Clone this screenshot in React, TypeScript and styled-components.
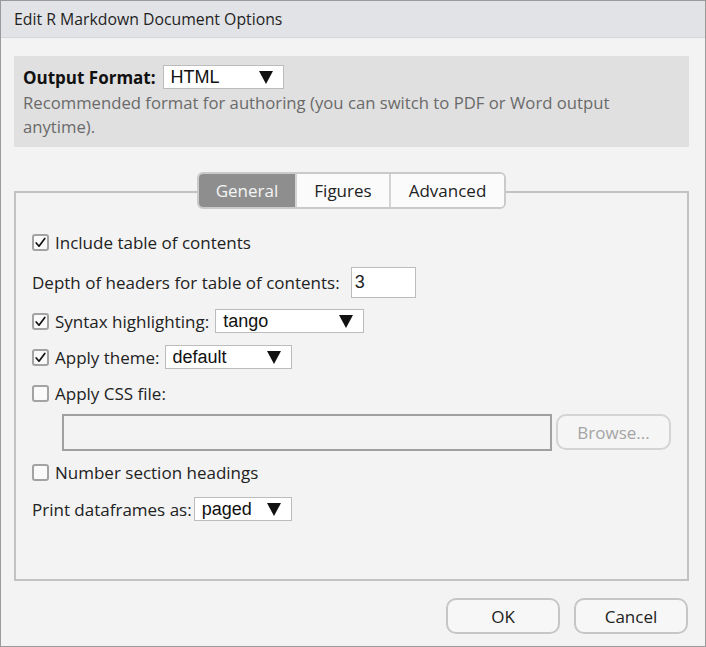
import React from "react";
import styled, { createGlobalStyle } from "styled-components";

const Global = createGlobalStyle`
  html, body { margin: 0; padding: 0; background: #f3f3f3; }
  * { box-sizing: border-box; }
`;

const UI = `"Open Sans", "Noto Sans", sans-serif`;
const SEL = `"Liberation Sans", Arial, sans-serif`;

const Dialog = styled.div`
  width: 706px;
  height: 647px;
  border: 1px solid #9a9a9a;
  background: #f3f3f3;
  display: flex;
  flex-direction: column;
  font-family: ${UI};
  color: #222;
`;

const TitleBar = styled.div`
  height: 37px;
  flex: none;
  background: #e2e3e7;
  border-bottom: 1px solid #d6d7db;
  padding-left: 13px;
  display: flex;
  align-items: center;
  font-size: 15.8px;
  color: #1f1f1f;
`;

const Body = styled.div`
  flex: 1;
  display: flex;
  flex-direction: column;
  padding: 18px 16px 12px 13px;
`;

const FormatPanel = styled.div`
  background: #e0e0e0;
  height: 91px;
  padding: 9px 9px 0 9px;
`;

const FormatLine = styled.div`
  display: flex;
  align-items: center;
  height: 24px;
  gap: 7px;
`;

const Bold = styled.span`
  font-weight: 700;
  font-size: 17px;
  color: #111;
`;

const Desc = styled.div`
  font-size: 16.7px;
  line-height: 24px;
  margin-top: 2px;
  color: #6a6a6a;
`;

const SelectBox = styled.div<{ $w: number }>`
  width: ${(p) => p.$w}px;
  height: 24px;
  background: #fff;
  border: 1px solid #bcbcbc;
  display: flex;
  align-items: center;
  justify-content: space-between;
  padding: 0 10px 0 7px;
  font-family: ${SEL};
  font-size: 18px;
  color: #111;
  flex: none;
`;

const TabSection = styled.div`
  flex: 1;
  display: flex;
  flex-direction: column;
  margin-top: 25px;
`;

const TabBar = styled.div`
  display: flex;
  justify-content: center;
  position: relative;
  z-index: 1;
  height: 37px;
`;

const TabGroup = styled.div`
  display: flex;
  border: 2px solid #cacaca;
  border-radius: 6px;
  overflow: hidden;
  background: #fbfbfb;
`;

const Tab = styled.div<{ $w: number; $active?: boolean }>`
  width: ${(p) => p.$w}px;
  display: flex;
  align-items: center;
  justify-content: center;
  font-size: 17px;
  background: ${(p) => (p.$active ? "#8e8e8e" : "#fbfbfb")};
  color: ${(p) => (p.$active ? "#f4f4f4" : "#222")};
  & + & {
    border-left: 2px solid #d4d4d4;
  }
`;

const Panel = styled.div`
  flex: 1;
  margin-top: -18px;
  border: 2px solid #c2c2c2;
  padding: 29px 16px 0 16px;
  display: flex;
  flex-direction: column;
`;

const Row = styled.div<{ $h: number; $gap?: number }>`
  height: ${(p) => p.$h}px;
  display: flex;
  align-items: center;
  font-size: 17px;
  gap: ${(p) => p.$gap ?? 5}px;
  flex: none;
`;

const CheckLabel = styled.label`
  display: flex;
  align-items: center;
  gap: 6px;
`;

const Box = styled.span`
  width: 17px;
  height: 17px;
  border: 2px solid #a3a3a3;
  border-radius: 3px;
  background: #fafafa;
  display: flex;
  align-items: center;
  justify-content: center;
  flex: none;
`;

const NumberInput = styled.div`
  width: 65px;
  height: 31px;
  background: #fff;
  border: 1px solid #bcbcbc;
  display: flex;
  align-items: center;
  padding-left: 3px;
  font-family: ${SEL};
  font-size: 18px;
  margin-left: 6px;
`;

const FileRow = styled.div`
  height: 40px;
  display: flex;
  align-items: center;
  gap: 4px;
  padding-left: 30px;
  flex: none;
`;

const FileInput = styled.div`
  width: 492px;
  height: 37px;
  border: 2px solid #a0a0a0;
  background: #f3f3f3;
`;

const RoundButton = styled.div<{ $w: number; $disabled?: boolean }>`
  width: ${(p) => p.$w}px;
  height: 36px;
  border: 2px solid ${(p) => (p.$disabled ? "#d4d4d4" : "#c6c6c6")};
  border-radius: 10px;
  background: ${(p) => (p.$disabled ? "#f5f5f5" : "#f7f7f7")};
  color: ${(p) => (p.$disabled ? "#a4a4a4" : "#222")};
  display: flex;
  align-items: center;
  justify-content: center;
  font-size: 17px;
  flex: none;
`;

const Footer = styled.div`
  display: flex;
  justify-content: flex-end;
  gap: 14px;
  margin-top: 17px;
  padding-right: 1px;
`;

const Arrow = () => (
  <svg width="14" height="13" viewBox="0 0 14 13">
    <polygon points="0,0 14,0 7,13" fill="#111" />
  </svg>
);

const Check = ({ on }: { on?: boolean }) => (
  <Box>
    {on && (
      <svg width="13" height="13" viewBox="0 0 13 13">
        <path d="M2.2 7 L5 10.2 L10.8 2.4" fill="none" stroke="#111" strokeWidth="1.7" strokeLinecap="round" strokeLinejoin="round" />
      </svg>
    )}
  </Box>
);

const Select = ({ w, value }: { w: number; value: string }) => (
  <SelectBox $w={w}>
    <span>{value}</span>
    <Arrow />
  </SelectBox>
);

export default function App() {
  return (
    <>
      <Global />
      <Dialog>
        <TitleBar>Edit R Markdown Document Options</TitleBar>
        <Body>
          <FormatPanel>
            <FormatLine>
              <Bold>Output Format:</Bold>
              <Select w={121} value="HTML" />
            </FormatLine>
            <Desc>
              Recommended format for authoring (you can switch to PDF or Word output anytime).
            </Desc>
          </FormatPanel>
          <TabSection>
            <TabBar>
              <TabGroup>
                <Tab $w={96} $active>General</Tab>
                <Tab $w={94}>Figures</Tab>
                <Tab $w={115}>Advanced</Tab>
              </TabGroup>
            </TabBar>
            <Panel>
              <Row $h={40}>
                <CheckLabel><Check on />Include table of contents</CheckLabel>
              </Row>
              <Row $h={40}>
                Depth of headers for table of contents:
                <NumberInput>3</NumberInput>
              </Row>
              <Row $h={38} $gap={6}>
                <CheckLabel><Check on />Syntax highlighting:</CheckLabel>
                <Select w={149} value="tango" />
              </Row>
              <Row $h={34}>
                <CheckLabel><Check on />Apply theme:</CheckLabel>
                <Select w={127} value="default" />
              </Row>
              <Row $h={38}>
                <CheckLabel><Check />Apply CSS file:</CheckLabel>
              </Row>
              <FileRow>
                <FileInput />
                <RoundButton $w={115} $disabled>Browse...</RoundButton>
              </FileRow>
              <Row $h={40}>
                <CheckLabel><Check />Number section headings</CheckLabel>
              </Row>
              <Row $h={34} $gap={2}>
                Print dataframes as:
                <Select w={98} value="paged" />
              </Row>
            </Panel>
          </TabSection>
          <Footer>
            <RoundButton $w={114}>OK</RoundButton>
            <RoundButton $w={114}>Cancel</RoundButton>
          </Footer>
        </Body>
      </Dialog>
    </>
  );
}
